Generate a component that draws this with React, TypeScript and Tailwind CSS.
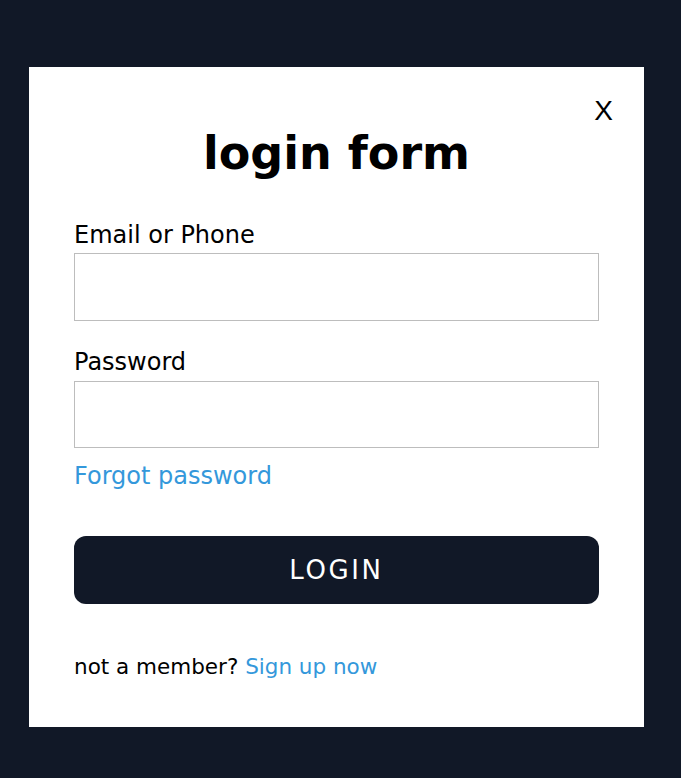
export default function App() {
  return (
    <div className="min-h-screen w-full bg-[#111827] pt-[67px] pl-[29px]" style={{ fontFamily: '"Comic Sans MS", "DejaVu Sans", sans-serif' }}>
      <div className="relative h-[660px] w-[615px] bg-white px-[45px]">
        <button
          className="absolute right-[31px] top-[30px] text-[28px] leading-none text-black"
          style={{ fontFamily: '"Liberation Sans", Arial, sans-serif' }}
        >
          X
        </button>

        <h1 className="pt-[60px] text-center text-[46px] font-bold leading-[52px] text-black">login form</h1>

        <form className="mt-[42px] flex flex-col">
          <label className="text-[24px] leading-[28px] text-black">Email or Phone</label>
          <input type="text" className="mt-1 h-[68px] w-full border border-[#bdbdbd] outline-none" />

          <label className="mt-[27px] text-[24px] leading-[28px] text-black">Password</label>
          <input type="password" className="mt-[5px] h-[67px] w-full border border-[#bdbdbd] outline-none" />

          <a className="mt-[14px] text-[24px] leading-[28px] text-[#3498db]">Forgot password</a>

          <button type="button" className="mt-[46px] h-[68px] w-full rounded-xl bg-[#111827] text-[26px] tracking-widest text-white">
            LOGIN
          </button>

          <p className="mt-[49px] text-[21.5px] leading-[28px] text-black">
            not a member? <a className="text-[#3498db]">Sign up now</a>
          </p>
        </form>
      </div>
    </div>
  );
}
